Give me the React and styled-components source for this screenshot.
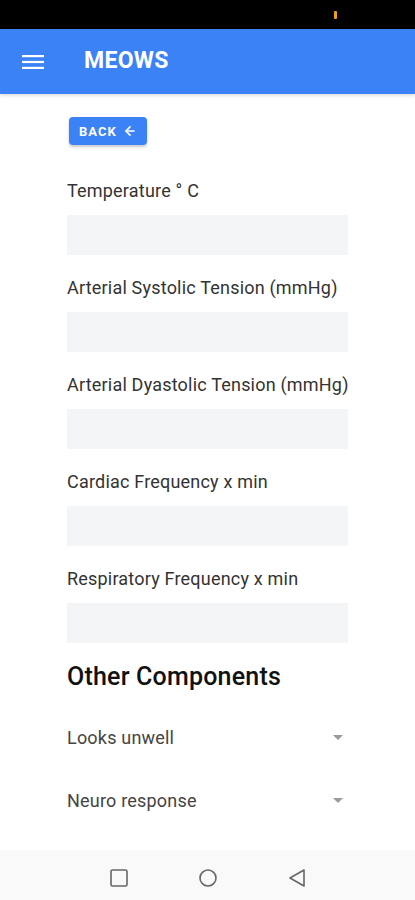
import React from "react";
import styled, { createGlobalStyle } from "styled-components";

const Global = createGlobalStyle`
  html, body { margin: 0; padding: 0; background: #fff; }
  body { font-family: Roboto, "Noto Sans", sans-serif; }
  * { box-sizing: border-box; }
`;

const Screen = styled.div`
  width: 415px;
  height: 900px;
  display: flex;
  flex-direction: column;
  background: #fff;
  overflow: hidden;
`;

const StatusBar = styled.div`
  height: 29px;
  background: #000;
  display: flex;
  align-items: center;
  padding-left: 334px;
`;

const StatusDot = styled.div`
  width: 3px;
  height: 8px;
  border-radius: 1px;
  background: #e8a21c;
`;

const AppBar = styled.header`
  height: 65px;
  background: #3b82f6;
  display: flex;
  align-items: center;
  padding-left: 22px;
  gap: 40px;
  box-shadow: 0 2px 3px rgba(0, 0, 0, 0.12);
  position: relative;
  z-index: 1;
`;

const MenuIcon = styled.svg`
  width: 22px;
  height: 16px;
  display: block;
`;

const Title = styled.h1`
  margin: 0 0 2px 0;
  color: #fff;
  font-size: 23px;
  font-weight: 700;
  letter-spacing: 0.3px;
`;

const Content = styled.main`
  flex: 1;
  padding: 23px 0 0 67px;
  display: flex;
  flex-direction: column;
`;

const BackButton = styled.button`
  align-self: flex-start;
  margin-left: 2px;
  height: 28px;
  padding: 0 10px;
  border: none;
  border-radius: 4px;
  background: #3b82f6;
  color: #fff;
  font-family: Roboto, sans-serif;
  font-weight: 700;
  font-size: 13px;
  letter-spacing: 1px;
  display: flex;
  align-items: center;
  gap: 6px;
  box-shadow: 0 2px 3px rgba(0, 0, 0, 0.22);
`;

const Form = styled.div`
  margin-top: 35px;
  display: flex;
  flex-direction: column;
  gap: 22px;
`;

const Field = styled.div`
  display: flex;
  flex-direction: column;
  gap: 14px;
`;

const Label = styled.label`
  font-size: 18px;
  line-height: 21px;
  letter-spacing: 0.2px;
  white-space: nowrap;
  color: #333;
`;

const Input = styled.input`
  width: 281px;
  height: 40px;
  border: none;
  background: #f3f5f7;
  outline: none;
`;

const Heading = styled.h2`
  margin: 19px 0 0 0;
  font-size: 25px;
  font-weight: 500;
  letter-spacing: 0.2px;
  white-space: nowrap;
  color: #111;
  line-height: 30px;
`;

const SelectRow = styled.div`
  width: 281px;
  display: flex;
  align-items: center;
  justify-content: space-between;
  margin-top: ${(p) => p.$mt}px;
  padding-right: 5px;
`;

const SelectLabel = styled.span`
  font-size: 18px;
  line-height: 21px;
  letter-spacing: 0.2px;
  white-space: nowrap;
  color: #444;
`;

const Caret = styled.span`
  width: 0;
  height: 0;
  border-left: 5px solid transparent;
  border-right: 5px solid transparent;
  border-top: 5px solid #9a9a9a;
`;

const NavBar = styled.nav`
  height: 50px;
  background: #f9f9f9;
  display: flex;
  align-items: center;
  gap: 71px;
  padding-left: 110px;
  padding-top: 5px;
`;

const NavIcon = styled.svg`
  width: 18px;
  height: 18px;
  display: block;
`;

const fields = [
  "Temperature ° C",
  "Arterial Systolic Tension (mmHg)",
  "Arterial Dyastolic Tension (mmHg)",
  "Cardiac Frequency x min",
  "Respiratory Frequency x min",
];

export default function App() {
  return (
    <Screen>
      <Global />
      <StatusBar>
        <StatusDot />
      </StatusBar>
      <AppBar>
        <MenuIcon viewBox="0 0 22 16">
          <rect x="0" y="1" width="22" height="2.2" fill="#fff" />
          <rect x="0" y="6.9" width="22" height="2.2" fill="#fff" />
          <rect x="0" y="12.8" width="22" height="2.2" fill="#fff" />
        </MenuIcon>
        <Title>MEOWS</Title>
      </AppBar>
      <Content>
        <BackButton>
          BACK
          <svg width="14" height="14" viewBox="0 0 24 24" fill="none" stroke="#fff" strokeWidth="2.8" strokeLinecap="round" strokeLinejoin="round">
            <path d="M19 12H5" />
            <path d="M12 19l-7-7 7-7" />
          </svg>
        </BackButton>
        <Form>
          {fields.map((f) => (
            <Field key={f}>
              <Label>{f}</Label>
              <Input />
            </Field>
          ))}
        </Form>
        <Heading>Other Components</Heading>
        <SelectRow $mt={35}>
          <SelectLabel>Looks unwell</SelectLabel>
          <Caret />
        </SelectRow>
        <SelectRow $mt={42}>
          <SelectLabel>Neuro response</SelectLabel>
          <Caret />
        </SelectRow>
      </Content>
      <NavBar>
        <NavIcon viewBox="0 0 18 18">
          <rect x="1" y="1" width="16" height="16" rx="1.5" fill="none" stroke="#666" strokeWidth="1.6" />
        </NavIcon>
        <NavIcon viewBox="0 0 18 18">
          <circle cx="9" cy="9" r="8" fill="none" stroke="#666" strokeWidth="1.6" />
        </NavIcon>
        <NavIcon viewBox="0 0 18 18">
          <path d="M16 1 L2 9 L16 17 Z" fill="none" stroke="#666" strokeWidth="1.6" strokeLinejoin="round" />
        </NavIcon>
      </NavBar>
    </Screen>
  );
}
